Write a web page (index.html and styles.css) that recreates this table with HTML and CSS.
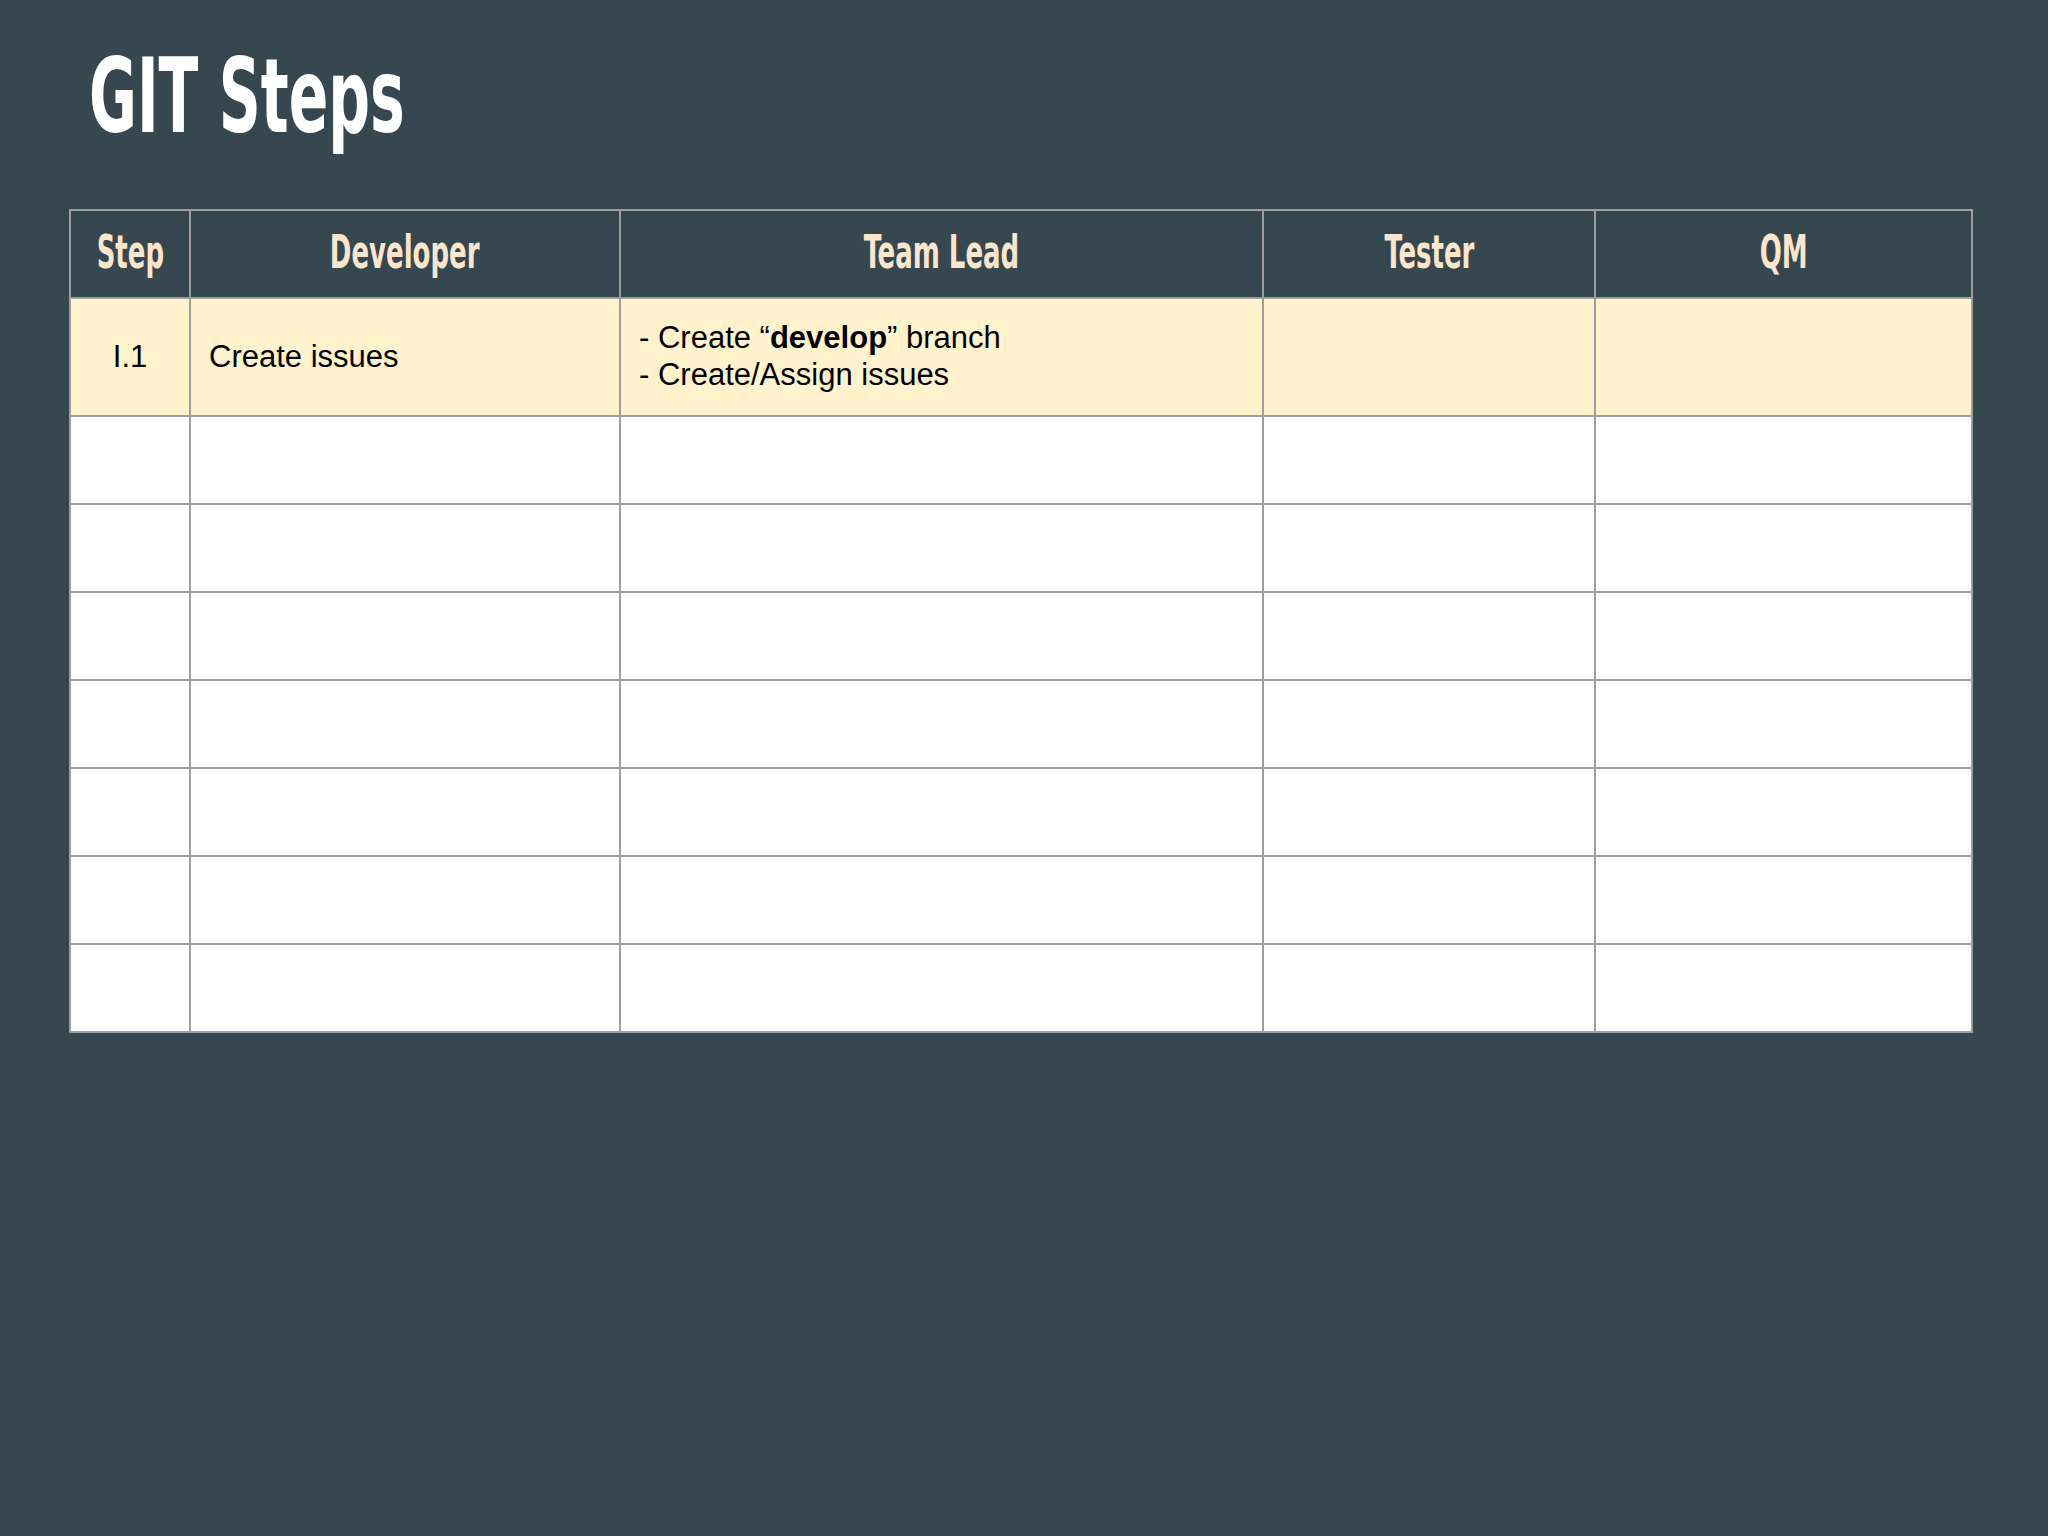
FILE: index.html
```html
<!DOCTYPE html>
<html lang="en">
<head>
<meta charset="utf-8">
<title>GIT Steps</title>
<link rel="stylesheet" href="styles.css">
</head>
<body>
<main class="slide">
  <header class="slide-head">
    <h1 class="title">GIT Steps</h1>
  </header>
  <table class="steps">
    <colgroup>
      <col class="c-step">
      <col class="c-dev">
      <col class="c-lead">
      <col class="c-test">
      <col class="c-qm">
    </colgroup>
    <thead>
      <tr>
        <th><span class="hd">Step</span></th>
        <th><span class="hd">Developer</span></th>
        <th><span class="hd">Team Lead</span></th>
        <th><span class="hd">Tester</span></th>
        <th><span class="hd">QM</span></th>
      </tr>
    </thead>
    <tbody>
      <tr class="hl">
        <td class="num">I.1</td>
        <td>Create issues</td>
        <td>- Create “<b>develop</b>” branch<br>- Create/Assign issues</td>
        <td></td>
        <td></td>
      </tr>
      <tr><td></td><td></td><td></td><td></td><td></td></tr>
      <tr><td></td><td></td><td></td><td></td><td></td></tr>
      <tr><td></td><td></td><td></td><td></td><td></td></tr>
      <tr><td></td><td></td><td></td><td></td><td></td></tr>
      <tr><td></td><td></td><td></td><td></td><td></td></tr>
      <tr><td></td><td></td><td></td><td></td><td></td></tr>
      <tr><td></td><td></td><td></td><td></td><td></td></tr>
    </tbody>
  </table>
</main>
</body>
</html>
```

FILE: styles.css
```css
html, body {
  margin: 0;
  padding: 0;
}
body {
  background: #364750;
  width: 2048px;
  height: 1536px;
  overflow: hidden;
}
.slide {
  display: flex;
  flex-direction: column;
  padding-left: 69px;
}
.slide-head {
  padding-top: 44px;
  padding-left: 20px;
}
.title {
  display: inline-block;
  margin: 0;
  height: 104px;
  font-family: "DejaVu Sans Condensed", "DejaVu Sans", sans-serif;
  font-stretch: condensed;
  font-weight: bold;
  font-size: 103px;
  line-height: 104px;
  color: #ffffff;
  white-space: nowrap;
  transform-origin: left center;
  transform: scaleX(0.63);
}
.steps {
  margin-top: 61px;
  border-collapse: collapse;
  table-layout: fixed;
  width: 1902px;
}
.c-step { width: 120px; }
.c-dev { width: 430px; }
.c-lead { width: 643px; }
.c-test { width: 332px; }
.c-qm { width: 377px; }
.steps th, .steps td {
  border: 2px solid #9e9e9e;
}
.steps th {
  height: 88px;
  box-sizing: border-box;
  background: #364750;
  color: #fce5cd;
  font-family: "DejaVu Sans Condensed", "DejaVu Sans", sans-serif;
  font-stretch: condensed;
  font-weight: bold;
  font-size: 46.6px;
  line-height: 1;
  text-align: center;
  vertical-align: middle;
  padding: 0 0 4px 0;
  white-space: nowrap;
}
.hd {
  display: inline-block;
  transform: scaleX(0.62);
  transform-origin: center;
}
.steps td {
  height: 88px;
  box-sizing: border-box;
  background: #ffffff;
  color: #000000;
  font-family: "Liberation Sans", Arial, sans-serif;
  font-size: 31px;
  line-height: 36.7px;
  vertical-align: middle;
  padding: 0 18px;
}
.steps tr.hl td {
  height: 118px;
  background: #fff2cc;
}
.steps td.num {
  text-align: center;
  padding: 0;
}
.steps b {
  font-weight: bold;
}
```
